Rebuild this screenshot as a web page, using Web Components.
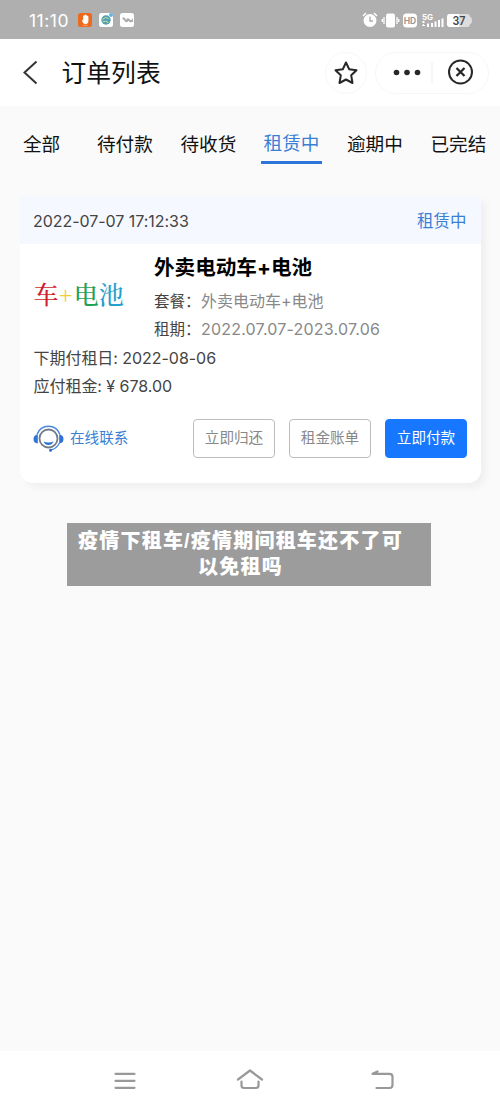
<!DOCTYPE html>
<html lang="zh-CN">
<head>
<meta charset="utf-8">
<title>订单列表</title>
<style>
body{margin:0;background:#fafafa;font-family:Inter,"Noto Sans CJK SC",sans-serif;color:#111}
</style>
</head>
<body>
<order-app></order-app>
<script>
const define = (name, html) => {
  const t = document.createElement('template');
  t.innerHTML = html;
  customElements.define(name, class extends HTMLElement {
    constructor() {
      super();
      this.attachShadow({mode: 'open'}).appendChild(t.content.cloneNode(true));
    }
  });
};

define('status-bar', `
<style>
:host{display:flex;height:39px;background:#afafaf;color:#fff;align-items:center;justify-content:space-between;padding:0 28px 0 29px;box-sizing:border-box}
.g{display:flex;align-items:center}
.time{font-size:17.500px;line-height:39px;letter-spacing:.5px;width:49px;padding-top:2px;white-space:nowrap}
svg{display:block}
</style>
<div class="g"><span class="time">11:10</span>
<svg width="57" height="16" viewBox="0 0 57 16">
<rect x="0" y="1" width="14" height="14" rx="2.5" fill="#ec6a1e"/>
<path d="M4 7.500l1.200 1V3.800q.8-.8 1.400 0V3q.8-.8 1.400 0v.6q.8-.6 1.400.2l1 .6V9q0 3-3 3T4 7.500z" fill="#fff"/><path d="M5 13.300h4.500" stroke="#f8b890" stroke-width=".8"/>
<rect x="21" y="1" width="14" height="14" rx="2.500" fill="#fff"/><circle cx="28" cy="8" r="4.700" fill="#549fb1"/><path d="M24.500 7.500q3-3.500 6-1M24.500 10q3-2 6 .5" fill="none" stroke="#c8e5a8" stroke-width="1"/><circle cx="33" cy="3" r="2" fill="#65b5e6"/>
<rect x="42" y="1" width="14" height="14" rx="2.500" fill="#fff"/><path d="M44.500 6.500h1.500l2 2.500q1 .8 1.300-.8t1.200-.7l1.500 1.500q1 .8 2-.3v1.300" fill="none" stroke="#aaa" stroke-width="1.900"/>
</svg></div>
<svg width="110" height="18" viewBox="0 0 110 18">
<g fill="#fff"><circle cx="8" cy="9.500" r="6.500"/><path d="M1 5l3-3M15 5l-3-3" stroke="#fff" stroke-width="1.500"/><path d="M8 5.500v4.500h3" fill="none" stroke="#aaa" stroke-width="1.300"/>
<rect x="24" y="2.500" width="9" height="14" rx="2"/><path d="M22 6v7M35 6v7M20.300 8v3M36.700 8v3" stroke="#fff" stroke-width="1.300"/>
<rect x="41" y="2.500" width="14" height="14" rx="3.500"/></g>
<text x="48" y="12.700" text-anchor="middle" font-size="8.500" font-weight="700" fill="#999">HD</text>
<text x="60" y="8.500" font-size="8" font-weight="700" fill="#fff" textLength="11">5G</text>
<path d="M61.500 10v2m-1.500-1h3M61.500 13v2m-1.500-.5h3" stroke="#fff" stroke-width="1"/>
<path d="M66 16v-3.500M70 16v-4M73.500 16v-5.500M77 16V9M80.500 16V7.500" stroke="#fff" stroke-width="2"/>
<path d="M88 3h17q3 0 3 3 2 0 2 3.500T108 13q0 3-3 3H88q-3 0-3-3V6q0-3 3-3z" fill="#ddd"/><path d="M88 3h9v13h-9q-3 0-3-3V6q0-3 3-3z" fill="#fff"/>
<text x="97" y="14" text-anchor="middle" font-size="12" font-weight="600" fill="#444" textLength="13" lengthAdjust="spacingAndGlyphs">37</text>
</svg>`);

define('nav-header', `
<style>
:host{display:flex;height:67px;background:#fff;align-items:center;padding:0 11px 0 22px;box-sizing:border-box}
h1{font:400 24.800px/67px Inter,"Noto Sans CJK SC",sans-serif;margin:0 auto 0 23.500px;padding-top:2px}
.star,.pill{height:42px;border:1px solid #f7f7f7;border-radius:22px;box-sizing:border-box;display:flex;align-items:center}
.star{width:42px;justify-content:center;margin-right:8px}.pill{width:114px}
svg{display:block}
</style>
<svg width="16" height="26" viewBox="0 0 16 26"><path d="M14.500 1.500L2.500 12.500 14.500 23.500" fill="none" stroke="#333" stroke-width="2"/></svg>
<h1>订单列表</h1>
<div class="star"><svg width="26" height="26" viewBox="0 0 26 26"><path d="M13 2.500l3.200 6.700 7.300 1-5.300 5.100 1.300 7.700-6.500-3.500L6.500 23l1.300-7.700-5.300-5.100 7.300-1z" fill="none" stroke="#282828" stroke-width="2" stroke-linejoin="round"/></svg></div>
<div class="pill"><svg width="112" height="40" viewBox="0 0 112 40"><g fill="#282828"><circle cx="20.500" cy="19.500" r="2.800"/><circle cx="31" cy="19.500" r="2.800"/><circle cx="41.500" cy="19.500" r="2.800"/></g><path d="M56 9v22" stroke="#eee"/><circle cx="84.500" cy="19" r="11.500" fill="none" stroke="#282828" stroke-width="2"/><path d="M80.500 15l8 8M88.500 15l-8 8" stroke="#282828" stroke-width="2.300"/></svg></div>`);

define('tab-item', `
<style>
:host{display:block;font-size:18.600px;line-height:36px;height:38px;white-space:nowrap;box-sizing:border-box}
:host([active]){color:#3b7fd5;border-bottom:3px solid #2c74d9;line-height:34px;text-align:center;width:61px}
</style><slot></slot>`);
define('tab-row', `
<style>:host{display:flex;height:90px;padding:20px 0 0 23px;box-sizing:border-box}
::slotted(:nth-child(1)){width:74px}::slotted(:nth-child(2)),::slotted(:nth-child(3)){width:83.500px}::slotted(:nth-child(3)){width:80.500px}::slotted(:nth-child(4)){margin-right:25px}::slotted(:nth-child(5)){width:83.500px}</style><slot></slot>`);

define('action-button', `
<style>:host{display:block;width:82px;height:39px;box-sizing:border-box;border:1.500px solid #bdbdbd;border-radius:4px;color:#888;font-size:14.600px;line-height:37px;text-align:center;white-space:nowrap}
:host([primary]){background:#1777ff;border-color:#1777ff;color:#fff}</style><slot></slot>`);

define('contact-link', `
<style>:host{display:flex;align-items:center;color:#3b7fd5;font-size:14.600px;line-height:39px;gap:6px;white-space:nowrap}svg{display:block}</style>
<svg width="31" height="28" viewBox="0 0 31 28"><circle cx="15.500" cy="13.500" r="9" fill="#fff" stroke="#747b88" stroke-width="1.800"/><path d="M4 9.500Q7 1.300 15.500 1.300T27 9.500" fill="none" stroke="#4a87de" stroke-width="1.500"/><path d="M4.800 9.500v9Q.5 18 .5 14t4.300-4.500zM26.200 9.500v9q4.300-.5 4.300-4.500t-4.300-4.500z" fill="#2e72d5"/><path d="M26.500 18q-3 6-9 7" fill="none" stroke="#4a87de" stroke-width="1.300"/><circle cx="17.500" cy="25.200" r="1.500" fill="#2e72d5"/><path d="M10.500 16.500q5 2 10 0-1.500 3.500-5 3.500t-5-3.500z" fill="#2e72d5"/></svg><slot></slot>`);

define('order-card', `
<style>
:host{display:block;margin:0 19px 0 20px;height:287px;background:#fff;border-radius:4px 4px 13px 13px;box-shadow:5px 5px 7px rgba(0,0,0,.045);overflow:visible;color:#444;font-size:16px;white-space:nowrap}
.top{height:48px;line-height:50px;background:#f5f8ff;display:flex;justify-content:space-between;padding:0 14.500px 0 13px;border-radius:4px 4px 0 0}
.date{letter-spacing:-.04px}.state{color:#3b7fd5;font-size:16.500px;line-height:51px}
.main{display:flex;height:100px;padding-left:13.500px}
.thumb{width:120.500px;font:500 25px/103px "Liberation Serif","Noto Serif CJK SC","Noto Sans CJK SC",serif;color:#d01f2c}
.p{color:#f2cd3c}.e{color:#1fa254;margin-left:1px}.c{color:#229fcd}
h2{font-size:20.600px;line-height:30px;margin:9px 0 4px;color:#000;font-weight:700}
.r{line-height:28px;display:flex;color:#888}.r b{font-weight:400;color:#444;width:47px;font-size:15.500px;line-height:29px}
.r span{height:28px}.rng{letter-spacing:.21px}
.line{line-height:28px;padding-left:13.500px;letter-spacing:-.04px}
.acts{display:flex;gap:14px;margin:17px 14px 0 13px}
.r{height:28px}.main{height:102px}.main+.line{margin-top:-2px}.acts{margin-top:19px}
contact-link{margin-right:auto}
</style>
<div class="top"><span class="date">2022-07-07 17:12:33</span><span class="state">租赁中</span></div>
<div class="main"><div class="thumb">车<span class="p">+</span><span class="e">电</span><span class="c">池</span></div>
<div><h2>外卖电动车+电池</h2><div class="r"><b>套餐：</b><span>外卖电动车+电池</span></div><div class="r"><b>租期：</b><span class="rng">2022.07.07-2023.07.06</span></div></div></div>
<div class="line">下期付租日: 2022-08-06</div><div class="line">应付租金: ¥ 678.00</div>
<div class="acts"><contact-link>在线联系</contact-link><action-button>立即归还</action-button><action-button>租金账单</action-button><action-button primary>立即付款</action-button></div>`);

define('caption-banner', `
<style>:host{display:block;width:364px;height:63px;margin:40px 0 0 67px;padding:5px 27px 0 10px;box-sizing:border-box;background:#9c9c9c;color:#fff;font:900 20px/26px "Liberation Sans","Noto Sans CJK SC",sans-serif;letter-spacing:1.200px;text-align:center;white-space:nowrap}</style><slot></slot>`);

define('system-nav', `
<style>:host{display:flex;height:59px;background:#fff;margin-top:auto;padding:16px 0 0 112px;box-sizing:border-box}svg{display:block;fill:none;stroke:#999;stroke-width:2.200;stroke-linecap:round;stroke-linejoin:round}
.home{margin:0 106px 0 98px}</style>
<svg width="26" height="26"><path d="M3.500 6.800h19M3.500 13.800h19M3.500 20.800h19"/></svg>
<svg class="home" width="29" height="26"><path d="M2 12.500L14 3.500 26 12.500M5.500 14.500v4q0 2.500 2.500 2.500h12q2.500 0 2.500-2.500v-4"/></svg>
<svg width="26" height="26"><path d="M6.500 4.500L1.500 6.800H18.500q3 0 3 3v8.200q0 3-3 3H5.500"/></svg>`);

define('order-app', `
<style>:host{display:flex;flex-direction:column;height:1110px;width:500px;overflow:hidden;background:#fafafa}</style>
<status-bar></status-bar><nav-header></nav-header>
<tab-row><tab-item>全部</tab-item><tab-item>待付款</tab-item><tab-item>待收货</tab-item><tab-item active>租赁中</tab-item><tab-item>逾期中</tab-item><tab-item>已完结</tab-item></tab-row>
<order-card></order-card>
<caption-banner>疫情下租车/疫情期间租车还不了可<br>以免租吗</caption-banner>
<system-nav></system-nav>`);
</script>
</body>
</html>
